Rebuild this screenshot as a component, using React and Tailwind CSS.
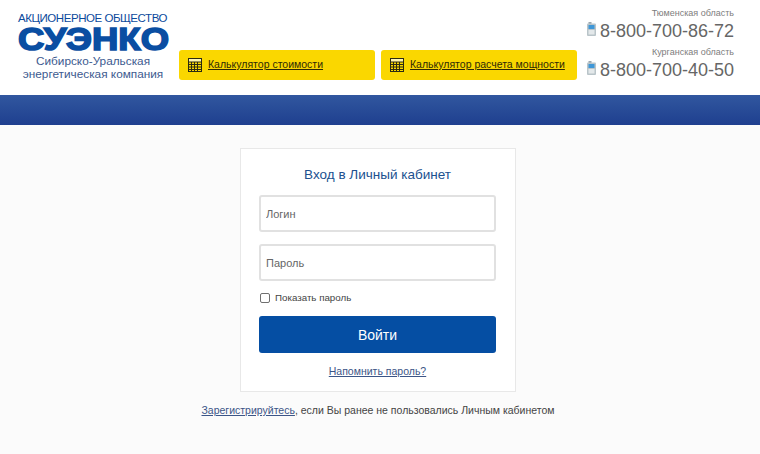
const sans = "font-['Liberation_Sans',Arial,sans-serif]";

function CalcIcon() {
  return (
    <svg width="14" height="14" viewBox="0 0 14 14" className="shrink-0" fill="none" stroke="#2b2a12" strokeWidth="1">
      <rect x="0.5" y="0.5" width="13" height="13" />
      <rect x="0.5" y="0.5" width="13" height="3.5" fill="#fff6b0" />
      <path d="M0.5 6.5H13.5M0.5 9H13.5M0.5 11.5H13.5M3.5 4V13.5M6.5 4V13.5M9.5 4V13.5" />
    </svg>
  );
}

function PhoneIcon() {
  return (
    <svg width="9" height="14" viewBox="0 0 9 14" className="shrink-0">
      <rect x="1.5" y="0" width="3" height="2" fill="#9aa6ad" />
      <rect x="0" y="1.5" width="9" height="12.5" rx="1" fill="#b9c4c9" />
      <rect x="1.5" y="3" width="6" height="4" fill="#3f97d8" />
      <rect x="1.5" y="8" width="6" height="4.5" fill="#e3e8ea" />
    </svg>
  );
}

function CalcLink({ width, children }) {
  return (
    <a href="#" className={`flex h-[30px] items-center gap-[6px] whitespace-nowrap rounded-[3px] bg-[#fad700] pl-[9px] text-[10.5px] text-[#2f2a05] underline ${width}`}>
      <CalcIcon />
      {children}
    </a>
  );
}

function Phone({ region, number }) {
  return (
    <div className="flex flex-col items-end">
      <div className="text-[9px] leading-[12px] text-[#7d7d7d]">{region}</div>
      <div className="mt-[1px] flex items-center gap-[4px] text-[18px] leading-[22px] text-[#666]">
        <span className="-mt-[5px]"><PhoneIcon /></span>
        {number}
      </div>
    </div>
  );
}

function Field({ placeholder, type }) {
  return (
    <input
      type={type}
      placeholder={placeholder}
      className="h-[37px] w-full rounded-[3px] border-2 border-[#e1e1e1] bg-white px-[5px] text-[11px] text-[#555] outline-none placeholder:text-[#666]"
    />
  );
}

export default function App() {
  return (
    <div className={`h-[454px] overflow-hidden bg-[#fbfbfb] ${sans}`}>
      <header className="flex h-[95px] bg-white">
        <div className="w-[179px] shrink-0 pl-[18px] pt-[12px]">
          <div className="w-[150px] whitespace-nowrap text-[11.5px] leading-[12px] tracking-[-0.45px] text-[#0b4a9c]">АКЦИОНЕРНОЕ ОБЩЕСТВО</div>
          <div className="mt-[3px] w-[150px] origin-left scale-x-[1.14] whitespace-nowrap text-[32px] font-bold leading-[24px] text-[#0a4ea2] [-webkit-text-stroke:1.6px_#0a4ea2]">СУЭНКО</div>
          <div className="mt-[4px] w-[150px] text-center text-[11.8px] leading-[13px] text-[#3d5a8f]">
            Сибирско-Уральская энергетическая компания
          </div>
        </div>
        <div className="flex gap-[6px] pt-[50px]">
          <CalcLink width="w-[196px]">Калькулятор стоимости</CalcLink>
          <CalcLink width="w-[196px]">Калькулятор расчета мощности</CalcLink>
        </div>
        <div className="ml-auto flex flex-col gap-[4px] pr-[26px] pt-[7px]">
          <Phone region="Тюменская область" number="8-800-700-86-72" />
          <Phone region="Курганская область" number="8-800-700-40-50" />
        </div>
      </header>
      <div className="h-[30px] bg-gradient-to-b from-[#31579f] to-[#1f3f8f]" />
      <main className="flex flex-col items-center pr-[4px] pt-[23px]">
        <div className="h-[244px] w-[276px] border border-[#e8e8e8] bg-white pl-[18px] pr-[19px] pt-[17px]">
          <h1 className="text-center text-[13.5px] leading-[17px] text-[#20518f]">Вход в Личный кабинет</h1>
          <div className="mt-[12px] flex flex-col gap-[12px]">
            <Field placeholder="Логин" type="text" />
            <Field placeholder="Пароль" type="password" />
          </div>
          <label className="ml-[1px] mt-[10px] flex items-center gap-[5px] text-[9.75px] leading-[13px] text-[#444]">
            <span className="h-[10px] w-[10px] rounded-[2px] border border-[#6f6f6f] bg-white" />
            Показать пароль
          </label>
          <button type="button" className="mt-[12px] h-[37px] w-full rounded-[3px] bg-[#054ea3] pt-[1px] text-[14px] text-white">Войти</button>
          <div className="mt-[11px] text-center text-[10.5px] leading-[14px]">
            <a href="#" className="text-[#3c5587] underline">Напомнить пароль?</a>
          </div>
        </div>
        <p className="mt-[11px] text-[10.5px] leading-[14px] text-[#444]">
          <a href="#" className="text-[#3c5587] underline">Зарегистрируйтесь</a>, если Вы ранее не пользовались Личным кабинетом
        </p>
      </main>
    </div>
  );
}
